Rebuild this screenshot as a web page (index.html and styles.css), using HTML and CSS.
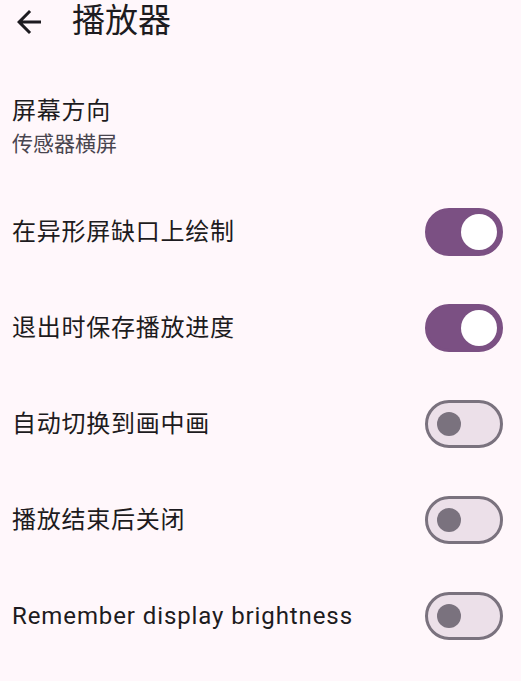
FILE: index.html
```html
<!DOCTYPE html>
<html lang="zh-CN">
<head>
<meta charset="utf-8">
<title>播放器</title>
<link rel="stylesheet" href="styles.css">
</head>
<body>
<header class="appbar">
  <button class="back" aria-label="返回">
    <svg viewBox="0 0 24 24" width="36" height="36"><path d="M20 11H7.83l5.59-5.59L12 4l-8 8 8 8 1.41-1.41L7.83 13H20v-2z" fill="#1d1b20"/></svg>
  </button>
  <h1 class="title">播放器</h1>
</header>
<main class="list">
  <div class="row two">
    <div class="texts">
      <div class="label">屏幕方向</div>
      <div class="sub">传感器横屏</div>
    </div>
  </div>
  <div class="row">
    <div class="label">在异形屏缺口上绘制</div>
    <span class="switch on"><span class="thumb"></span></span>
  </div>
  <div class="row">
    <div class="label">退出时保存播放进度</div>
    <span class="switch on"><span class="thumb"></span></span>
  </div>
  <div class="row">
    <div class="label">自动切换到画中画</div>
    <span class="switch"><span class="thumb"></span></span>
  </div>
  <div class="row">
    <div class="label">播放结束后关闭</div>
    <span class="switch"><span class="thumb"></span></span>
  </div>
  <div class="row">
    <div class="label latin">Remember display brightness</div>
    <span class="switch"><span class="thumb"></span></span>
  </div>
</main>
</body>
</html>
```
FILE: styles.css
```css
html, body {
  margin: 0;
  padding: 0;
  background: #fff7fb;
}
body {
  font-family: Roboto, "Noto Sans CJK SC", sans-serif;
  color: #1d1b20;
  overflow: hidden;
}
.appbar {
  height: 96px;
  margin-top: -27px;
  display: flex;
  align-items: center;
  padding-left: 11px;
}
.back {
  border: 0;
  background: none;
  padding: 0;
  width: 36px;
  height: 36px;
  display: flex;
  margin-top: 1px;
}
.title {
  margin: 0 0 0 25px;
  font-size: 33px;
  font-weight: 400;
  line-height: 42px;
}
.list {
  display: flex;
  flex-direction: column;
}
.row {
  display: flex;
  align-items: center;
  justify-content: space-between;
  padding: 24px 18px 24px 12px;
  min-height: 48px;
}
.row.two {
  padding-top: 24px;
  padding-bottom: 25px;
}
.label {
  font-size: 24px;
  line-height: 36px;
  letter-spacing: 0.75px;
}
.latin {
  letter-spacing: 0.9px;
}
.sub {
  font-size: 21px;
  line-height: 30px;
  color: #49454f;
}
.switch {
  box-sizing: border-box;
  width: 78px;
  height: 48px;
  border-radius: 24px;
  border: 3px solid #7a727e;
  background: #ece0e9;
  display: flex;
  align-items: center;
  padding-left: 9px;
}
.switch .thumb {
  width: 24px;
  height: 24px;
  border-radius: 50%;
  background: #7a727e;
}
.switch.on {
  border-color: #7b5083;
  background: #7b5083;
  justify-content: flex-end;
  padding: 0 3px 0 0;
}
.switch.on .thumb {
  width: 36px;
  height: 36px;
  background: #ffffff;
}
```
